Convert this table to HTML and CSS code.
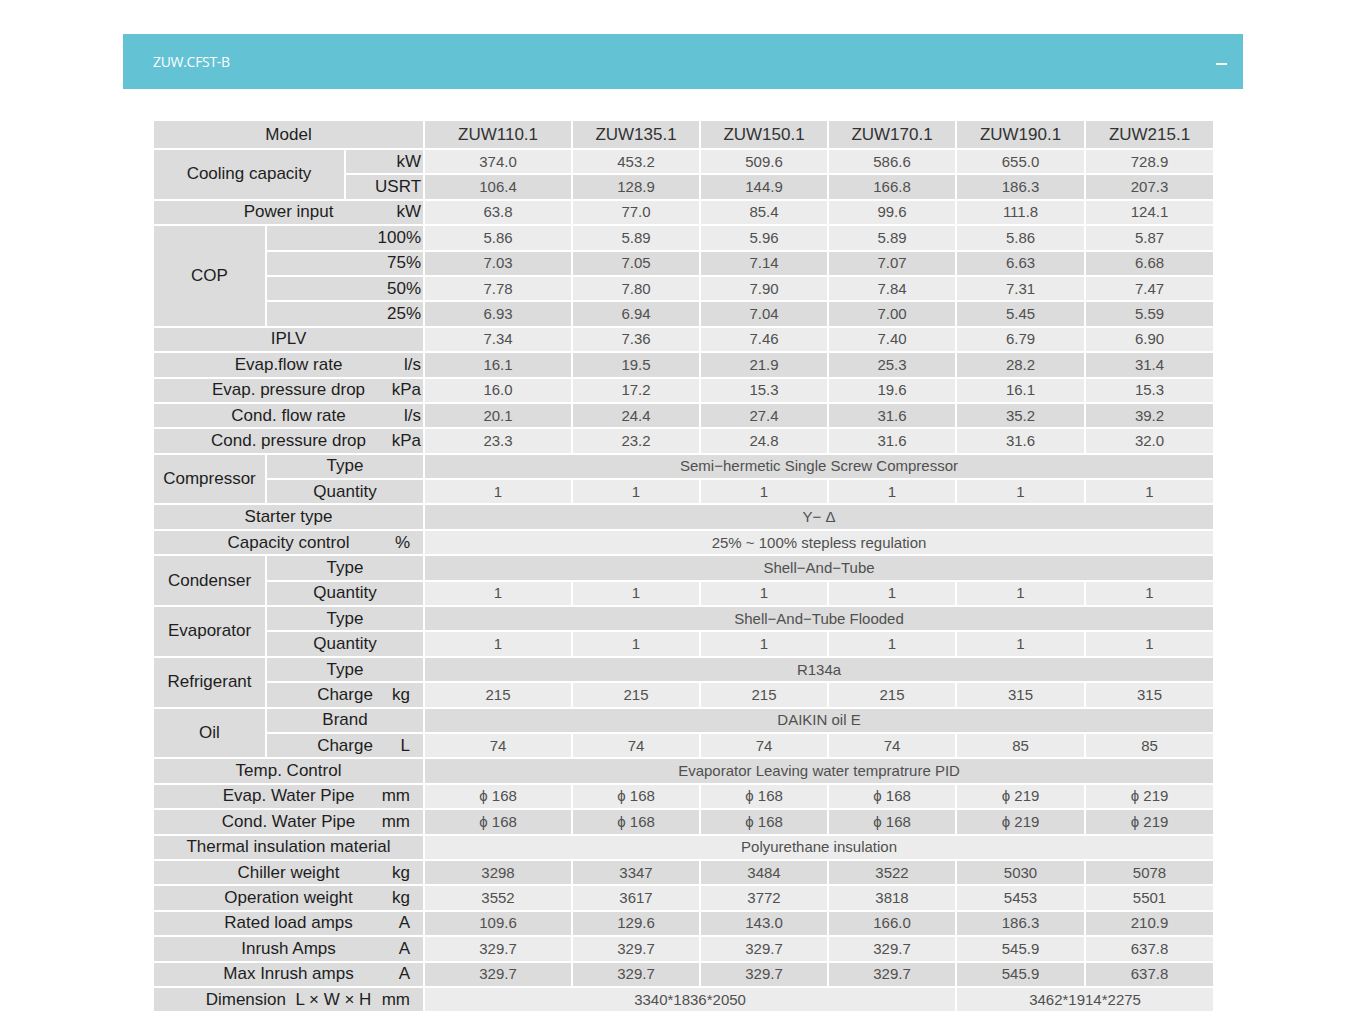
FILE: index.html
```html
<!DOCTYPE html>
<html lang="en">
<head>
<meta charset="utf-8">
<title>ZUW.CFST-B</title>
<link rel="stylesheet" href="styles.css">
</head>
<body>
<div class="page">
  <div class="bar">
    <span class="bar-title">ZUW.CFST-B</span>
    <span class="bar-toggle"></span>
  </div>
  <div class="content">
    <table class="spec">
      <colgroup>
        <col class="c-a"><col class="c-b"><col class="c-b">
        <col class="c-first"><col class="c-mid"><col class="c-mid"><col class="c-mid"><col class="c-end"><col class="c-end">
      </colgroup>
      <tr class="head">
        <th colspan="3" class="k">Model</th>
        <th class="m">ZUW110.1</th><th class="m">ZUW135.1</th><th class="m">ZUW150.1</th><th class="m">ZUW170.1</th><th class="m">ZUW190.1</th><th class="m">ZUW215.1</th>
      </tr>
      <tr class="l">
        <td rowspan="2" colspan="2" class="k">Cooling capacity</td><td class="k r">kW</td>
        <td>374.0</td><td>453.2</td><td>509.6</td><td>586.6</td><td>655.0</td><td>728.9</td>
      </tr>
      <tr class="d">
        <td class="k r">USRT</td>
        <td>106.4</td><td>128.9</td><td>144.9</td><td>166.8</td><td>186.3</td><td>207.3</td>
      </tr>
      <tr class="l">
        <td colspan="3" class="k"><div class="lu"><span class="t">Power input</span><span class="u">kW</span></div></td>
        <td>63.8</td><td>77.0</td><td>85.4</td><td>99.6</td><td>111.8</td><td>124.1</td>
      </tr>
      <tr class="l">
        <td rowspan="4" class="k">COP</td><td colspan="2" class="k r">100%</td>
        <td>5.86</td><td>5.89</td><td>5.96</td><td>5.89</td><td>5.86</td><td>5.87</td>
      </tr>
      <tr class="d">
        <td colspan="2" class="k r">75%</td>
        <td>7.03</td><td>7.05</td><td>7.14</td><td>7.07</td><td>6.63</td><td>6.68</td>
      </tr>
      <tr class="l">
        <td colspan="2" class="k r">50%</td>
        <td>7.78</td><td>7.80</td><td>7.90</td><td>7.84</td><td>7.31</td><td>7.47</td>
      </tr>
      <tr class="d">
        <td colspan="2" class="k r">25%</td>
        <td>6.93</td><td>6.94</td><td>7.04</td><td>7.00</td><td>5.45</td><td>5.59</td>
      </tr>
      <tr class="l">
        <td colspan="3" class="k">IPLV</td>
        <td>7.34</td><td>7.36</td><td>7.46</td><td>7.40</td><td>6.79</td><td>6.90</td>
      </tr>
      <tr class="d">
        <td colspan="3" class="k"><div class="lu"><span class="t">Evap.flow rate</span><span class="u">l/s</span></div></td>
        <td>16.1</td><td>19.5</td><td>21.9</td><td>25.3</td><td>28.2</td><td>31.4</td>
      </tr>
      <tr class="l">
        <td colspan="3" class="k"><div class="lu"><span class="t">Evap. pressure drop</span><span class="u">kPa</span></div></td>
        <td>16.0</td><td>17.2</td><td>15.3</td><td>19.6</td><td>16.1</td><td>15.3</td>
      </tr>
      <tr class="d">
        <td colspan="3" class="k"><div class="lu"><span class="t">Cond. flow rate</span><span class="u">l/s</span></div></td>
        <td>20.1</td><td>24.4</td><td>27.4</td><td>31.6</td><td>35.2</td><td>39.2</td>
      </tr>
      <tr class="l">
        <td colspan="3" class="k"><div class="lu"><span class="t">Cond. pressure drop</span><span class="u">kPa</span></div></td>
        <td>23.3</td><td>23.2</td><td>24.8</td><td>31.6</td><td>31.6</td><td>32.0</td>
      </tr>
      <tr class="d">
        <td rowspan="2" class="k">Compressor</td><td colspan="2" class="k">Type</td>
        <td colspan="6">Semi−hermetic Single Screw Compressor</td>
      </tr>
      <tr class="l">
        <td colspan="2" class="k">Quantity</td>
        <td>1</td><td>1</td><td>1</td><td>1</td><td>1</td><td>1</td>
      </tr>
      <tr class="d">
        <td colspan="3" class="k">Starter type</td>
        <td colspan="6">Y− Δ</td>
      </tr>
      <tr class="l">
        <td colspan="3" class="k"><div class="lu"><span class="t">Capacity control</span><span class="u u2">%</span></div></td>
        <td colspan="6">25% ~ 100% stepless regulation</td>
      </tr>
      <tr class="d">
        <td rowspan="2" class="k">Condenser</td><td colspan="2" class="k">Type</td>
        <td colspan="6">Shell−And−Tube</td>
      </tr>
      <tr class="l">
        <td colspan="2" class="k">Quantity</td>
        <td>1</td><td>1</td><td>1</td><td>1</td><td>1</td><td>1</td>
      </tr>
      <tr class="d">
        <td rowspan="2" class="k">Evaporator</td><td colspan="2" class="k">Type</td>
        <td colspan="6">Shell−And−Tube Flooded</td>
      </tr>
      <tr class="l">
        <td colspan="2" class="k">Quantity</td>
        <td>1</td><td>1</td><td>1</td><td>1</td><td>1</td><td>1</td>
      </tr>
      <tr class="d">
        <td rowspan="2" class="k">Refrigerant</td><td colspan="2" class="k">Type</td>
        <td colspan="6">R134a</td>
      </tr>
      <tr class="l">
        <td colspan="2" class="k"><div class="lu"><span class="t">Charge</span><span class="u u2">kg</span></div></td>
        <td>215</td><td>215</td><td>215</td><td>215</td><td>315</td><td>315</td>
      </tr>
      <tr class="d">
        <td rowspan="2" class="k">Oil</td><td colspan="2" class="k">Brand</td>
        <td colspan="6">DAIKIN oil E</td>
      </tr>
      <tr class="l">
        <td colspan="2" class="k"><div class="lu"><span class="t">Charge</span><span class="u u2">L</span></div></td>
        <td>74</td><td>74</td><td>74</td><td>74</td><td>85</td><td>85</td>
      </tr>
      <tr class="d">
        <td colspan="3" class="k">Temp. Control</td>
        <td colspan="6">Evaporator Leaving water tempratrure PID</td>
      </tr>
      <tr class="l">
        <td colspan="3" class="k"><div class="lu"><span class="t">Evap. Water Pipe</span><span class="u u2">mm</span></div></td>
        <td>ϕ 168</td><td>ϕ 168</td><td>ϕ 168</td><td>ϕ 168</td><td>ϕ 219</td><td>ϕ 219</td>
      </tr>
      <tr class="d">
        <td colspan="3" class="k"><div class="lu"><span class="t">Cond. Water Pipe</span><span class="u u2">mm</span></div></td>
        <td>ϕ 168</td><td>ϕ 168</td><td>ϕ 168</td><td>ϕ 168</td><td>ϕ 219</td><td>ϕ 219</td>
      </tr>
      <tr class="l">
        <td colspan="3" class="k">Thermal insulation material</td>
        <td colspan="6">Polyurethane insulation</td>
      </tr>
      <tr class="d">
        <td colspan="3" class="k"><div class="lu"><span class="t">Chiller weight</span><span class="u u2">kg</span></div></td>
        <td>3298</td><td>3347</td><td>3484</td><td>3522</td><td>5030</td><td>5078</td>
      </tr>
      <tr class="l">
        <td colspan="3" class="k"><div class="lu"><span class="t">Operation weight</span><span class="u u2">kg</span></div></td>
        <td>3552</td><td>3617</td><td>3772</td><td>3818</td><td>5453</td><td>5501</td>
      </tr>
      <tr class="d">
        <td colspan="3" class="k"><div class="lu"><span class="t">Rated load amps</span><span class="u u2">A</span></div></td>
        <td>109.6</td><td>129.6</td><td>143.0</td><td>166.0</td><td>186.3</td><td>210.9</td>
      </tr>
      <tr class="l">
        <td colspan="3" class="k"><div class="lu"><span class="t">Inrush Amps</span><span class="u u2">A</span></div></td>
        <td>329.7</td><td>329.7</td><td>329.7</td><td>329.7</td><td>545.9</td><td>637.8</td>
      </tr>
      <tr class="d">
        <td colspan="3" class="k"><div class="lu"><span class="t">Max Inrush amps</span><span class="u u2">A</span></div></td>
        <td>329.7</td><td>329.7</td><td>329.7</td><td>329.7</td><td>545.9</td><td>637.8</td>
      </tr>
      <tr class="l">
        <td colspan="3" class="k"><div class="lu"><span class="t">Dimension&nbsp; L × W × H</span><span class="u u2">mm</span></div></td>
        <td colspan="4">3340*1836*2050</td><td colspan="2">3462*1914*2275</td>
      </tr>
    </table>
  </div>
</div>
</body>
</html>
```
FILE: styles.css
```css
* { box-sizing: border-box; }

body {
  margin: 0;
  background: #ffffff;
  font-family: "Liberation Sans", Arial, sans-serif;
}

.page {
  width: 1120px;
  margin: 34px auto 0;
}

.bar {
  height: 55px;
  background: #63c2d4;
  display: flex;
  align-items: center;
  justify-content: space-between;
  padding: 0 16px 1px 30px;
  color: #ffffff;
}

.bar-title {
  font-family: "Open Sans", "Liberation Sans", sans-serif;
  font-size: 14px;
  letter-spacing: -0.3px;
}

.bar-toggle {
  width: 11px;
  height: 2px;
  background: #ffffff;
  margin-top: 5px;
}

.content {
  padding: 30px 28px 0 29px;
}

.spec {
  width: 1063px;
  border-collapse: collapse;
  table-layout: fixed;
}

.c-a { width: 113px; }
.c-b { width: 79px; }
.c-first { width: 148px; }
.c-mid { width: 128px; }
.c-end { width: 129px; }

.spec th,
.spec td {
  border: 2px solid #ffffff;
  padding: 0;
  font-weight: normal;
  text-align: center;
  vertical-align: middle;
  white-space: nowrap;
  line-height: 20px;
}

.spec tr { height: 25.4px; }
.spec tr.head { height: 29px; }

.spec td {
  font-size: 15px;
  color: #505050;
}

.spec tr.l td { background: #ececec; }
.spec tr.d td { background: #dcdcdc; }

.spec .m {
  background: #dcdcdc;
  font-size: 17px;
  color: #333333;
}

.spec .k,
.spec tr.l .k,
.spec tr.d .k {
  background: #dcdcdc;
  font-size: 17px;
  color: #1e1e1e;
}

.spec .r {
  text-align: right;
  padding-right: 2px;
}

.lu {
  display: grid;
  grid-template-columns: 1fr auto 1fr;
  align-items: center;
}

.lu .t { grid-column: 2; }

.lu .u {
  grid-column: 3;
  justify-self: end;
  margin-right: 2px;
}

.lu .u2 { margin-right: 13px; }
```
